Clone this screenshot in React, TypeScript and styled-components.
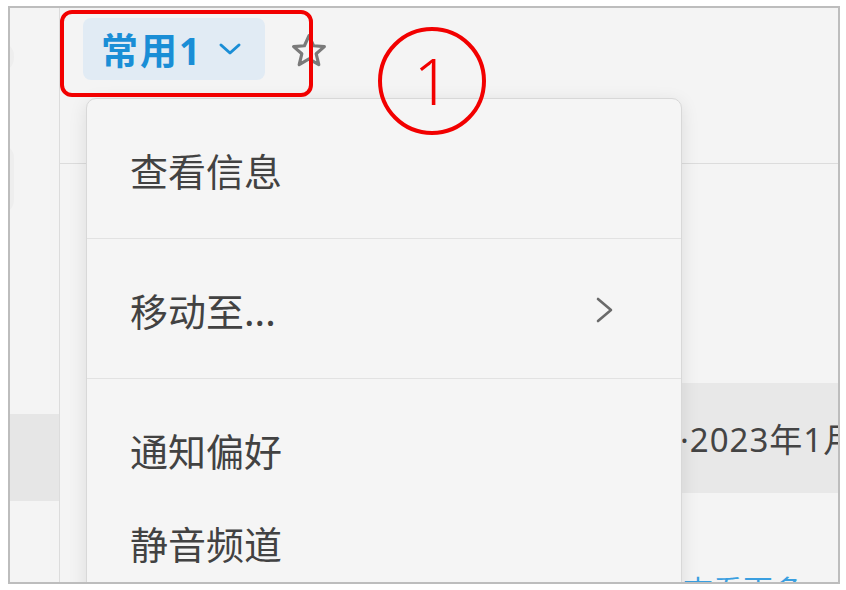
import React from "react";
import styled, { createGlobalStyle } from "styled-components";

const Global = createGlobalStyle`
  html, body { margin: 0; padding: 0; background: #ffffff; }
  body { font-family: "Noto Sans", "Noto Sans CJK SC", sans-serif; }
`;

const Frame = styled.div`
  position: relative;
  box-sizing: border-box;
  margin: 6px 0 0 8px;
  width: 832px;
  height: 578px;
  border: 2px solid #bdbdbd;
  background: #f4f4f4;
  display: flex;
  overflow: hidden;
`;

const Sidebar = styled.div`
  width: 49px;
  flex: none;
  border-right: 1px solid #dcdcdc;
  display: flex;
  flex-direction: column;
`;

const SideBlob = styled.div<{ $top: number; $h: number }>`
  margin-top: ${(p) => p.$top}px;
  margin-left: -22px;
  width: 26px;
  height: ${(p) => p.$h}px;
  border-radius: 0 14px 14px 0;
  background: #eeeeee;
`;

const SideActive = styled.div`
  margin-top: 200px;
  height: 87px;
  background: #e6e6e6;
`;

const Main = styled.div`
  flex: 1;
  display: flex;
  flex-direction: column;
  min-width: 0;
`;

const Header = styled.div`
  height: 145px;
  flex: none;
  border-bottom: 1px solid #dcdcdc;
  display: flex;
  align-items: flex-start;
  padding: 10px 0 0 23px;
  box-sizing: content-box;
  gap: 22px;
`;

const ChannelPill = styled.div`
  height: 62px;
  width: 182px;
  box-sizing: border-box;
  border-radius: 8px;
  background: #e1ebf4;
  display: flex;
  align-items: center;
  padding-left: 18px;
  gap: 16px;
  color: #1a8ed6;
  font-family: "Noto Sans", "Noto Sans CJK SC", sans-serif;
  font-weight: 700;
  font-size: 37px;
  letter-spacing: 2px;
`;

const StarWrap = styled.div`
  height: 66px;
  display: flex;
  align-items: center;
  color: #7a7a7a;
`;

const Body = styled.div`
  flex: 1;
  display: flex;
  flex-direction: column;
`;

const HoverRow = styled.div`
  margin-top: 219px;
  height: 110px;
  margin-left: 26px;
  background: #e8e8e8;
  display: flex;
  align-items: center;
  padding-left: 594px;
  white-space: nowrap;
  font-size: 33px;
  letter-spacing: 1px;
  color: #444;
  font-family: "Noto Sans", "Noto Sans CJK SC", sans-serif;
`;

const LinkRow = styled.div`
  margin-top: 76px;
  padding-left: 623px;
  white-space: nowrap;
  font-size: 30px;
  line-height: 40px;
  color: #3a9fe0;
  font-family: "Noto Sans CJK SC", "Noto Sans", sans-serif;
`;

const Menu = styled.div`
  position: absolute;
  left: 76px;
  top: 90px;
  width: 596px;
  height: 540px;
  box-sizing: border-box;
  background: #f5f5f5;
  border: 1px solid #d8d8d8;
  border-radius: 10px;
  box-shadow: 0 4px 18px rgba(0, 0, 0, 0.1);
  display: flex;
  flex-direction: column;
`;

const Section = styled.div`
  padding: 24px 0 22px;
  & + & {
    border-top: 1px solid #e2e2e2;
  }
`;

const Item = styled.div`
  height: 93px;
  display: flex;
  align-items: center;
  justify-content: space-between;
  padding: 0 64px 0 43px;
  font-family: "Noto Sans CJK SC", "Noto Sans", sans-serif;
  font-size: 38px;
  color: #424242;
`;

const Chevron = styled.svg`
  width: 24px;
  height: 34px;
  color: #6a6a6a;
`;

const RedBox = styled.div`
  position: absolute;
  left: 50px;
  top: 2px;
  width: 253px;
  height: 87px;
  box-sizing: border-box;
  border: 4px solid #f20000;
  border-radius: 12px;
  pointer-events: none;
`;

const RedCircle = styled.div`
  position: absolute;
  left: 368px;
  top: 19px;
  width: 108px;
  height: 108px;
  box-sizing: border-box;
  border: 4px solid #f20000;
  border-radius: 50%;
  display: flex;
  align-items: center;
  justify-content: center;
  color: #f20000;
  font-family: "Noto Sans", sans-serif;
  font-weight: 300;
  font-size: 64px;
  line-height: 1;
`;

export default function App() {
  return (
    <>
      <Global />
      <Frame>
        <Sidebar>
          <SideBlob $top={34} $h={30} />
          <SideBlob $top={72} $h={70} />
          <SideActive />
        </Sidebar>
        <Main>
          <Header>
            <ChannelPill>
              <span>常用1</span>
              <svg width="24" height="16" viewBox="0 0 24 16">
                <path d="M3 4 L12 12 L21 4" fill="none" stroke="currentColor" strokeWidth="3" strokeLinecap="round" strokeLinejoin="round" />
              </svg>
            </ChannelPill>
            <StarWrap>
              <svg width="44" height="42" viewBox="0 0 24 24">
                <path
                  d="M12 3.2 L14.6 9 L20.8 9.5 L16.1 13.6 L17.6 19.8 L12 16.5 L6.4 19.8 L7.9 13.6 L3.2 9.5 L9.4 9 Z"
                  fill="none"
                  stroke="currentColor"
                  strokeWidth="1.8"
                  strokeLinejoin="round"
                />
              </svg>
            </StarWrap>
          </Header>
          <Body>
            <HoverRow>·2023年1月</HoverRow>
            <LinkRow>查看更多</LinkRow>
          </Body>
        </Main>
        <Menu>
          <Section>
            <Item>查看信息</Item>
          </Section>
          <Section>
            <Item>
              <span>移动至...</span>
              <Chevron viewBox="0 0 24 34">
                <path d="M5 6 L18 17 L5 28" fill="none" stroke="currentColor" strokeWidth="2.6" strokeLinecap="round" strokeLinejoin="round" />
              </Chevron>
            </Item>
          </Section>
          <Section>
            <Item>通知偏好</Item>
            <Item>静音频道</Item>
          </Section>
        </Menu>
        <RedBox />
        <RedCircle>1</RedCircle>
      </Frame>
    </>
  );
}
